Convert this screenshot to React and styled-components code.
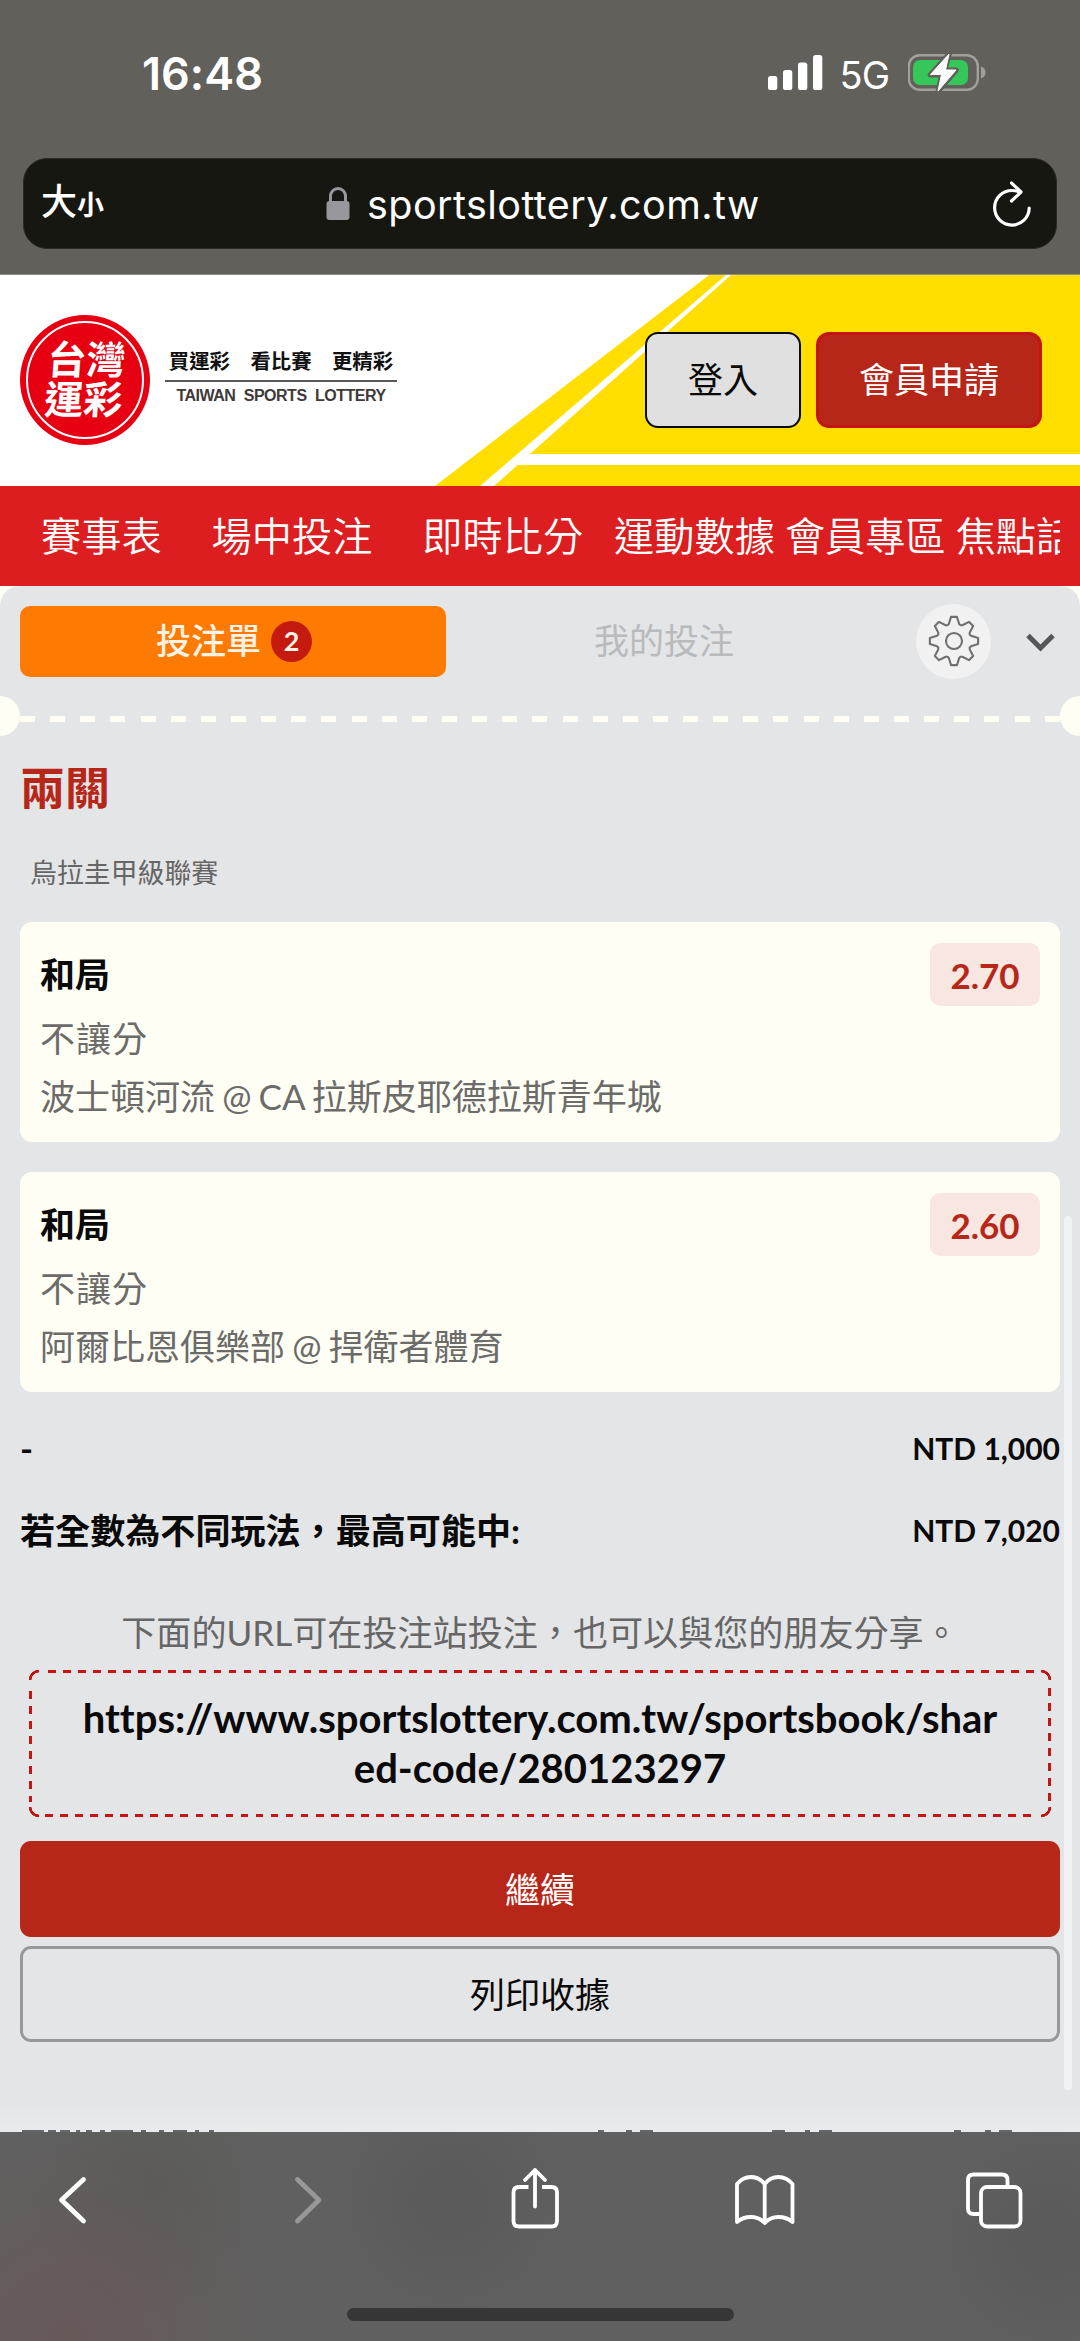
import React from "react"
import styled, { createGlobalStyle, ThemeProvider } from "styled-components"

const theme = {
  colors: {
    rojo: "#b72719",
    rojoVivo: "#c41414",
    nav: "#dc1e20",
    amarillo: "#ffde00",
    naranja: "#ff7a00",
    crema: "#fffef5",
    fondo: "#e4e5e7",
    gris: "#666666",
    negro: "#0a0a0a",
  },
  fonts: {
    ui: `Inter, "Noto Sans CJK TC", sans-serif`,
    web: `Lato, "Noto Sans CJK TC", sans-serif`,
  },
}

const GlobalStyle = createGlobalStyle`
  * {
    box-sizing: border-box;
  }
  body {
    margin: 0;
    background: #e4e5e7;
  }
  button {
    font-family: inherit;
    padding: 0;
    margin: 0;
  }
  p, h2 {
    margin: 0;
  }
`
const Screen = styled.div`
  width: 1080px;
  height: 2341px;
  display: flex;
  flex-direction: column;
  overflow: hidden;
  font-family: ${({ theme }) => theme.fonts.web};
  font-variant-ligatures: none;
  white-space: nowrap;
`
const BrowserTop = styled.div`
  height: 275px;
  flex: none;
  background: #62605b;
  border-bottom: 1px solid #8e8d8a;
  font-family: ${({ theme }) => theme.fonts.ui};
  color: #fff;
`
const StatusBar = styled.div`
  height: 158px;
  padding: 46px 93px 0 142px;
  display: flex;
  align-items: flex-start;
`
const Time = styled.div`
  font-size: 45px;
  line-height: 56px;
  font-weight: 600;
  letter-spacing: 0;
  flex: 1;
`
const Network = styled.div`
  font-size: 38px;
  line-height: 58px;
  margin: 0 19px 0 17px;
  letter-spacing: -1px;
`
const StatusIcon = styled.svg`
  display: block;
  flex: none;
`
const AddressBar = styled.div`
  margin: 0 23px;
  height: 91px;
  border-radius: 24px;
  background: #171711;
  border: 1px solid #2b2b26;
  display: flex;
  align-items: center;
  padding: 0 23px 0 17px;
`
const TextSize = styled.div`
  width: 285px;
  display: flex;
  align-items: baseline;
  font-size: 36px;
  line-height: 48px;
  font-weight: 500;
  small {
    font-size: 27px;
    font-weight: 700;
  }
`
const Url = styled.div`
  flex: 1;
  margin-left: 17px;
  padding-top: 2px;
  font-size: 39.5px;
  line-height: 50px;
  letter-spacing: 0.45px;
`
const Header = styled.header`
  height: 211px;
  flex: none;
  display: flex;
  align-items: center;
  padding: 0 38px 2px 20px;
  position: relative;
  background: #fff;
`
const Stripes = styled.svg`
  position: absolute;
  top: 0;
  right: 0;
`
const Seal = styled.div`
  width: 130px;
  height: 130px;
  flex: none;
  border-radius: 50%;
  background: #e60012;
  padding: 6px;
  display: flex;
`
const SealRing = styled.div`
  flex: 1;
  display: flex;
  border: 2px solid #fff;
  border-radius: 50%;
`
const SealText = styled.div`
  flex: 1;
  display: flex;
  flex-direction: column;
  align-items: center;
  justify-content: center;
  padding-bottom: 3px;
  color: #fff;
  font-size: 39px;
  line-height: 40px;
  font-weight: 700;
  transform: skewX(-4deg);
`
const Slogan = styled.div`
  width: 232px;
  margin: 0 0 4px 15px;
  flex: none;
  text-align: center;
`
const SloganZh = styled.div`
  font-size: 20.4px;
  line-height: 30px;
  font-weight: 700;
  color: #111;
  border-bottom: 2px solid #595757;
  padding-bottom: 4px;
`
const SloganEn = styled.div`
  font-family: "Liberation Sans", Arial, sans-serif;
  font-size: 16px;
  line-height: 27px;
  font-weight: 700;
  letter-spacing: -0.5px;
  word-spacing: 4.5px;
  color: #3e3a39;
`
const HeaderButtons = styled.div`
  flex: 1;
  display: flex;
  justify-content: flex-end;
  gap: 15px;
  position: relative;
`
const HeaderButton = styled.button`
  width: ${({ $primary }) => ($primary ? 226 : 156)}px;
  height: 96px;
  padding-bottom: 4px;
  border-radius: 13px;
  font-size: 35px;
  color: ${({ $primary, theme }) => ($primary ? "#fff" : theme.colors.negro)};
  background: ${({ $primary, theme }) => ($primary ? theme.colors.rojo : "#e0e0e0")};
  border: ${({ $primary, theme }) => ($primary ? `3px solid ${theme.colors.rojoVivo}` : `2px solid ${theme.colors.negro}`)};
`
const Nav = styled.nav`
  height: 100px;
  flex: none;
  background: ${({ theme }) => theme.colors.nav};
  padding: 0 20px 0 41px;
`
const NavList = styled.div`
  display: flex;
  overflow: hidden;
  color: #fff;
  font-size: 40.2px;
  line-height: 99px;
  font-weight: 350;
`
const NavItem = styled.a`
  flex: none;
  margin-right: ${({ $gap }) => $gap}px;
`
const Slip = styled.main`
  flex: 1;
  background: ${({ theme }) => theme.colors.crema};
  position: relative;
`
const SlipInner = styled.div`
  height: 1546px;
  border-radius: 20px 20px 0 0;
  overflow: hidden;
  background: linear-gradient(#e4e5e7 1515px, #e9eaeb 1543px);
`
const Tabs = styled.div`
  height: 110px;
  display: flex;
  align-items: center;
  padding: 0 22px 0 20px;
`
const Tab = styled.div`
  height: 71px;
  border-radius: 10px;
  display: flex;
  align-items: center;
  justify-content: center;
  gap: 10px;
  font-size: 35px;
  line-height: 68px;
  padding-bottom: 3px;
  width: ${({ $active }) => ($active ? 426 : 436)}px;
  padding-left: ${({ $active }) => ($active ? 2 : 0)}px;
  background: ${({ $active, theme }) => ($active ? theme.colors.naranja : "transparent")};
  color: ${({ $active }) => ($active ? "#fff3e6" : "#b9babb")};
  font-weight: ${({ $active }) => ($active ? 500 : 400)};
`
const Badge = styled.span`
  width: 41px;
  height: 41px;
  margin-top: 3px;
  border-radius: 50%;
  background: #c41a10;
  font-size: 27px;
  line-height: 40px;
  text-align: center;
  font-weight: 700;
`
const GearButton = styled.div`
  width: 75px;
  height: 75px;
  margin: 0 34px;
  border-radius: 50%;
  background: #f1f1f1;
  display: flex;
  align-items: center;
  justify-content: center;
`
const Tear = styled.div`
  height: 40px;
  display: flex;
  justify-content: space-between;
  align-items: center;
`
const Notch = styled.div`
  width: 20px;
  height: 40px;
  background: ${({ theme }) => theme.colors.crema};
  border-radius: ${({ $right }) => ($right ? "20px 0 0 20px" : "0 20px 20px 0")};
`
const Perforation = styled.div`
  flex: 1;
  height: 6px;
  margin-top: 6px;
  background: repeating-linear-gradient(90deg, ${({ theme }) => theme.colors.crema} 0 15px, transparent 15px 30.14px);
`
const Body = styled.div`
  padding: 0 20px;
`
const SlipTitle = styled.h2`
  margin-top: 22px;
  font-size: 45px;
  line-height: 60px;
  font-weight: 700;
  color: ${({ theme }) => theme.colors.rojo};
`
const League = styled.p`
  margin: 35px 0 29px 10px;
  font-size: 26.9px;
  line-height: 40px;
  color: ${({ theme }) => theme.colors.gris};
`
const Card = styled.section`
  height: 220px;
  margin-bottom: 30px;
  border-radius: 12px;
  background: ${({ theme }) => theme.colors.crema};
  padding: 21px 20px 0 20px;
  color: #6b6b69;
  font-size: 35px;
  line-height: 58px;
  &:last-of-type {
    margin-bottom: 15px;
  }
`
const CardTop = styled.div`
  display: flex;
  justify-content: space-between;
  align-items: center;
  height: 63px;
`
const Pick = styled.p`
  padding-bottom: 2px;
  font-weight: 700;
  color: ${({ theme }) => theme.colors.negro};
`
const Odds = styled.div`
  width: 110px;
  height: 63px;
  border-radius: 10px;
  background: #f8e7e0;
  color: ${({ theme }) => theme.colors.rojo};
  font-weight: 700;
  line-height: 64px;
  text-align: center;
`
const Market = styled.p`
  margin-top: 3px;
  letter-spacing: 1px;
`
const Match = styled.p`
  word-spacing: -1.8px;
`
const TotalRow = styled.div`
  display: flex;
  justify-content: space-between;
  align-items: center;
  height: 82px;
  font-weight: 700;
  color: ${({ theme }) => theme.colors.negro};
  font-size: 35.1px;
  line-height: 50px;
`
const Amount = styled.span`
  font-size: 30px;
`
const ShareNote = styled.p`
  margin: 36px 0 13px;
  text-align: center;
  font-size: 35.1px;
  line-height: 50px;
  color: ${({ theme }) => theme.colors.gris};
`
const dashes = (deg) =>
  `repeating-linear-gradient(${deg}deg, #c41414 0 7.6px, transparent 7.6px 15.05px)`
const corner = (at) =>
  `radial-gradient(circle at ${at}, transparent 7.3px, #c41414 7.7px 10px, transparent 10.4px)`
const ShareUrl = styled.div`
  height: 147px;
  margin: 0 9px 24px 9px;
  padding: 23px 50px 0;
  text-align: center;
  white-space: normal;
  word-break: break-all;
  font-size: 40px;
  line-height: 50px;
  font-weight: 700;
  color: ${({ theme }) => theme.colors.negro};
  background:
    ${corner("100% 100%")} 0 0 / 10px 10px,
    ${corner("0 100%")} 100% 0 / 10px 10px,
    ${corner("100% 0")} 0 100% / 10px 10px,
    ${corner("0 0")} 100% 100% / 10px 10px,
    ${dashes(90)} 19px 0 / calc(100% - 34px) 3px,
    ${dashes(90)} 16px 100% / calc(100% - 30px) 3px,
    ${dashes(180)} 0 21px / 3px calc(100% - 36px),
    ${dashes(180)} 100% 18px / 3px calc(100% - 33px);
  background-repeat: no-repeat;
`
const ActionButton = styled.button`
  display: block;
  width: 100%;
  height: 96px;
  padding-bottom: 3px;
  margin-bottom: 9px;
  border-radius: 11px;
  font-size: 35px;
  background: ${({ $primary, theme }) => ($primary ? theme.colors.rojo : "transparent")};
  color: ${({ $primary, theme }) => ($primary ? "#fff" : theme.colors.negro)};
  border: ${({ $primary }) => ($primary ? "none" : "3px solid #97989a")};
`
const ScrollThumb = styled.div`
  position: absolute;
  right: 8px;
  top: 630px;
  width: 8px;
  height: 874px;
  border-radius: 4px;
  background: #f1f2f4;
`
/* tops of the next row, cut off by the toolbar */
const Peek = styled.div`
  position: absolute;
  left: 22px;
  right: 22px;
  bottom: 0;
  height: 2px;
  display: flex;
`
const PeekMark = styled.i`
  width: ${({ $w }) => $w}px;
  margin-left: ${({ $ml }) => $ml}px;
  background: #66676a;
`
const Toolbar = styled.footer`
  height: 209px;
  flex: none;
  display: flex;
  flex-direction: column;
  align-items: center;
  background:
    radial-gradient(circle at 70px 210px, rgba(110, 84, 84, 0.6), transparent 210px),
    radial-gradient(circle at 150px 60px, rgba(90, 90, 88, 0.8), transparent 130px),
    radial-gradient(circle at 450px 70px, rgba(88, 88, 88, 0.8), transparent 130px),
    radial-gradient(circle at 1050px 110px, rgba(88, 88, 88, 0.8), transparent 130px),
    #606060;
`
const Tools = styled.div`
  width: 100%;
  height: 176px;
  display: grid;
  grid-template-columns: 236px 227px 230px 229px 72px;
  padding: 32px 0 0 36px;
`
const ToolIcon = styled.svg`
  width: 72px;
  height: 72px;
  fill: none;
  stroke: ${({ $dim }) => ($dim ? "#989898" : "#fff")};
  stroke-width: ${({ $thick }) => ($thick ? 4.8 : 3.8)};
  stroke-linecap: round;
  stroke-linejoin: round;
`
const HomeIndicator = styled.div`
  width: 387px;
  height: 13px;
  border-radius: 7px;
  background: #363636;
`

const navItems = [
  { text: "賽事表", gap: 50 },
  { text: "場中投注", gap: 50 },
  { text: "即時比分", gap: 31 },
  { text: "運動數據", gap: 10 },
  { text: "會員專區", gap: 10 },
  { text: "焦點話題", gap: 0 },
]
const bets = [
  { pick: "和局", odds: "2.70", market: "不讓分", match: "波士頓河流 @ CA 拉斯皮耶德拉斯青年城" },
  { pick: "和局", odds: "2.60", market: "不讓分", match: "阿爾比恩俱樂部 @ 捍衛者體育" },
]
const peekMarks = [
  [0, 22], [4, 8], [4, 10], [6, 4], [6, 6], [8, 5], [6, 22], [8, 5], [13, 5], [9, 14], [8, 4], [10, 5],
  [384, 6], [22, 6], [8, 13], [119, 13], [20, 5], [9, 13], [122, 7], [24, 6], [8, 13],
]

const Signal = () => (
  <StatusIcon width="55" height="56" viewBox="767 46 55 56" fill="#fff">
    <rect x="767" y="76" width="9.3" height="14" rx="2.6" />
    <rect x="782" y="70" width="9.3" height="20" rx="2.6" />
    <rect x="797" y="62.5" width="9.3" height="27.5" rx="2.6" />
    <rect x="812" y="55" width="9.3" height="35" rx="2.6" />
  </StatusIcon>
)
const Battery = () => (
  <StatusIcon width="79" height="56" viewBox="908 46 79 56">
    <rect x="908.8" y="55.2" width="69" height="34.6" rx="11" fill="none" stroke="#a2a09d" strokeWidth="2.4" />
    <path d="M981 66.5c6 1.5 6 10.5 0 12z" fill="#a2a09d" />
    <rect x="913" y="60" width="55" height="25" rx="7" fill="#35c759" />
    <path d="M949.5 53.5L930 75H941.5L938 91.5L956.5 70H945z" fill="#fff" stroke="#62605b" strokeWidth="5" strokeLinejoin="round" />
    <path d="M949 54L930.5 74.5H941.5L938 91L956 70H945.5z" fill="#fff" stroke="#fff" strokeLinejoin="round" />
  </StatusIcon>
)
const Lock = () => (
  <StatusIcon width="24" height="34" viewBox="0 0 24 34">
    <rect x="0.5" y="14" width="23" height="19" rx="3" fill="#98979c" />
    <path d="M4.5 15V9a7.5 7.5 0 0 1 15 0v6" fill="none" stroke="#98979c" strokeWidth="3" />
  </StatusIcon>
)
const Reload = () => (
  <StatusIcon width="42" height="50" viewBox="991 177 42 50" fill="none" stroke="#fff" strokeWidth="3.2" strokeLinecap="round" strokeLinejoin="round">
    <path d="M1029.2 206A17.3 17.3 0 1 1 1012 188.5Q1016 188.5 1020 190" />
    <path d="M1011.5 181L1021 190L1011.5 199" />
  </StatusIcon>
)

// eight-tooth outline, 45 degrees per tooth
const Gear = () => {
  const point = (r, deg) => {
    const a = (deg * Math.PI) / 180
    return `${(r * Math.sin(a)).toFixed(2)},${(-r * Math.cos(a)).toFixed(2)}`
  }
  const points = Array.from({ length: 8 }, (_, i) => {
    const d = i * 45
    return [point(24.3, d - 7), point(24.3, d + 7), point(17.8, d + 17), point(17, d + 22.5), point(17.8, d + 28)].join(" ")
  }).join(" ")
  return (
    <svg width="54" height="54" viewBox="-27 -27 54 54" fill="none" stroke="#707070" strokeWidth="2.1" strokeLinejoin="round">
      <polygon points={points} />
      <circle r="8" />
    </svg>
  )
}

const App = () => {
  return (
    <ThemeProvider theme={theme}>
      <GlobalStyle />
      <Screen lang="zh-Hant">
        <BrowserTop>
          <StatusBar>
            <Time>16:48</Time>
            <Signal />
            <Network>5G</Network>
            <Battery />
          </StatusBar>
          <AddressBar>
            <TextSize>
              大<small>小</small>
            </TextSize>
            <Lock />
            <Url>sportslottery.com.tw</Url>
            <Reload />
          </AddressBar>
        </BrowserTop>
        <Header>
          <Stripes width="660" height="211" viewBox="420 275 660 211">
            <polygon points="435,486 709,275 1080,275 1080,486" fill="#ffde00" />
            <polygon points="480,486 726,275 731,275 494,486" fill="#fff" />
            <polygon points="528,454 1080,454 1080,465 514,465" fill="#fff" />
          </Stripes>
          <Seal>
            <SealRing>
              <SealText>
                <span>台灣</span>
                <span>運彩</span>
              </SealText>
            </SealRing>
          </Seal>
          <Slogan>
            <SloganZh>買運彩　看比賽　更精彩</SloganZh>
            <SloganEn>TAIWAN SPORTS LOTTERY</SloganEn>
          </Slogan>
          <HeaderButtons>
            <HeaderButton>登入</HeaderButton>
            <HeaderButton $primary>會員申請</HeaderButton>
          </HeaderButtons>
        </Header>
        <Nav>
          <NavList>
            {navItems.map((item, key) => {
              const { text, gap } = item
              return <NavItem key={key} $gap={gap}>{text}</NavItem>
            })}
          </NavList>
        </Nav>
        <Slip>
          <SlipInner>
            <Tabs>
              <Tab $active>
                投注單<Badge>2</Badge>
              </Tab>
              <Tab>我的投注</Tab>
              <GearButton>
                <Gear />
              </GearButton>
              <svg width="32" height="22" viewBox="0 0 32 22" fill="none" stroke="#575757" strokeWidth="5">
                <path d="M3 5.500L15.500 18L28 5.500" />
              </svg>
            </Tabs>
            <Tear>
              <Notch />
              <Perforation />
              <Notch $right />
            </Tear>
            <Body>
              <SlipTitle>兩關</SlipTitle>
              <League>烏拉圭甲級聯賽</League>
              {bets.map((bet, key) => (
                <Card key={key}>
                  <CardTop>
                    <Pick>{bet.pick}</Pick>
                    <Odds>{bet.odds}</Odds>
                  </CardTop>
                  <Market>{bet.market}</Market>
                  <Match>{bet.match}</Match>
                </Card>
              ))}
              <TotalRow>
                <span>-</span>
                <Amount>NTD 1,000</Amount>
              </TotalRow>
              <TotalRow>
                <span>若全數為不同玩法，最高可能中:</span>
                <Amount>NTD 7,020</Amount>
              </TotalRow>
              <ShareNote>下面的URL可在投注站投注，也可以與您的朋友分享。</ShareNote>
              <ShareUrl>https://www.sportslottery.com.tw/sportsbook/shared-code/280123297</ShareUrl>
              <ActionButton $primary>繼續</ActionButton>
              <ActionButton>列印收據</ActionButton>
            </Body>
          </SlipInner>
          <ScrollThumb />
          <Peek>
            {peekMarks.map(([ml, w], key) => (
              <PeekMark key={key} $ml={ml} $w={w} />
            ))}
          </Peek>
        </Slip>
        <Toolbar>
          <Tools>
            <ToolIcon $thick viewBox="36 2164 72 72">
              <path d="M83.5 2179.5L61.5 2200L83.5 2221" />
            </ToolIcon>
            <ToolIcon $thick $dim viewBox="272 2164 72 72">
              <path d="M297.5 2179.5L319 2200L297.5 2221" />
            </ToolIcon>
            <ToolIcon viewBox="499 2164 72 72">
              <path d="M528.5 2187H519Q513.5 2187 513.5 2192.5V2221Q513.5 2226.5 519 2226.5H551.5Q557 2226.5 557 2221V2192.5Q557 2187 551.5 2187H542" strokeLinecap="butt" />
              <path d="M535 2206.5V2170M525 2180L535 2170L545 2180" />
            </ToolIcon>
            <ToolIcon viewBox="729 2164 72 72">
              <path d="M764.7 2184Q759 2177 750.8 2177Q743 2177 737 2184V2222Q743 2217 750.8 2217Q759 2217 764.7 2223Q770 2217 778.5 2217Q786.5 2217 792.5 2222V2184Q786.5 2177 778.5 2177Q770 2177 764.7 2184V2222" />
            </ToolIcon>
            <ToolIcon viewBox="958 2164 72 72">
              <rect x="981" y="2187" width="39.5" height="39.5" rx="6" />
              <path d="M1007.5 2185.5V2180Q1007.5 2174.5 1002 2174.5H973.5Q968 2174.5 968 2180V2208.5Q968 2214 973.5 2214H980" strokeLinecap="butt" />
            </ToolIcon>
          </Tools>
          <HomeIndicator />
        </Toolbar>
      </Screen>
    </ThemeProvider>
  )
}

export default App
